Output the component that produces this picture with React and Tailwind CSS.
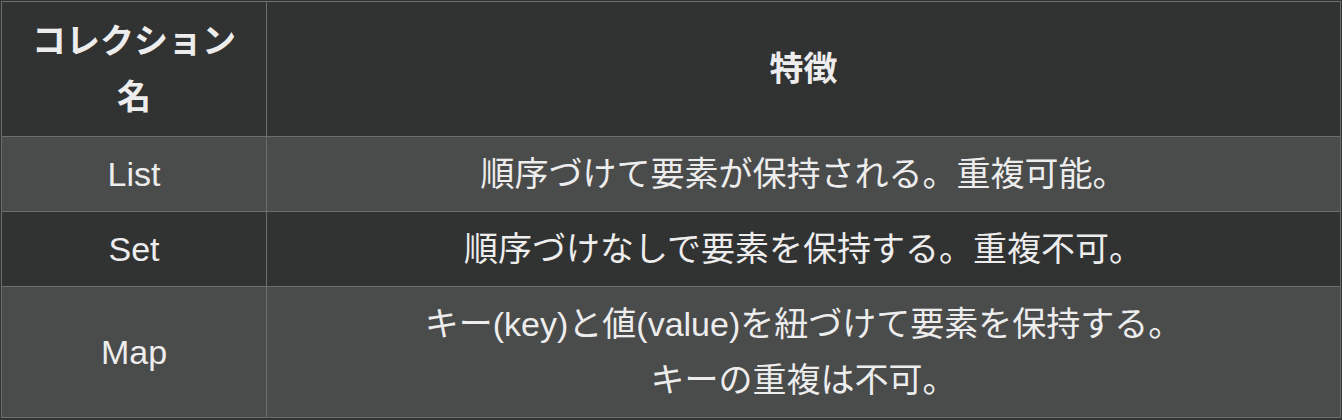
const rows = [
  { name: "List", desc: ["順序づけて要素が保持される。重複可能。"] },
  { name: "Set", desc: ["順序づけなしで要素を保持する。重複不可。"] },
  { name: "Map", desc: ["キー(key)と値(value)を紐づけて要素を保持する。", "キーの重複は不可。"] },
];

export default function App() {
  return (
    <div className="min-h-screen bg-[#313232] pl-px pt-px font-['Liberation_Sans','Noto_Sans_CJK_JP',sans-serif] text-[#ededed]">
      <table className="w-[1340px] table-fixed border-collapse text-[34px] leading-[56px]">
        <colgroup>
          <col className="w-[265px]" />
          <col />
        </colgroup>
        <thead>
          <tr className="bg-[#313232]">
            <th className="border border-[#6c6d6d] px-6 py-[11px] text-center font-bold">コレクション名</th>
            <th className="border border-[#6c6d6d] px-6 py-[11px] text-center font-bold">特徴</th>
          </tr>
        </thead>
        <tbody>
          {rows.map((r, i) => (
            <tr key={r.name} className={i % 2 === 0 ? "bg-[#4a4b4b]" : "bg-[#313232]"}>
              <td className="border border-[#6c6d6d] px-6 py-[9px] text-center">{r.name}</td>
              <td className="border border-[#6c6d6d] px-6 py-[9px] text-center">
                {r.desc.map((d) => (
                  <div key={d}>{d}</div>
                ))}
              </td>
            </tr>
          ))}
        </tbody>
      </table>
    </div>
  );
}
